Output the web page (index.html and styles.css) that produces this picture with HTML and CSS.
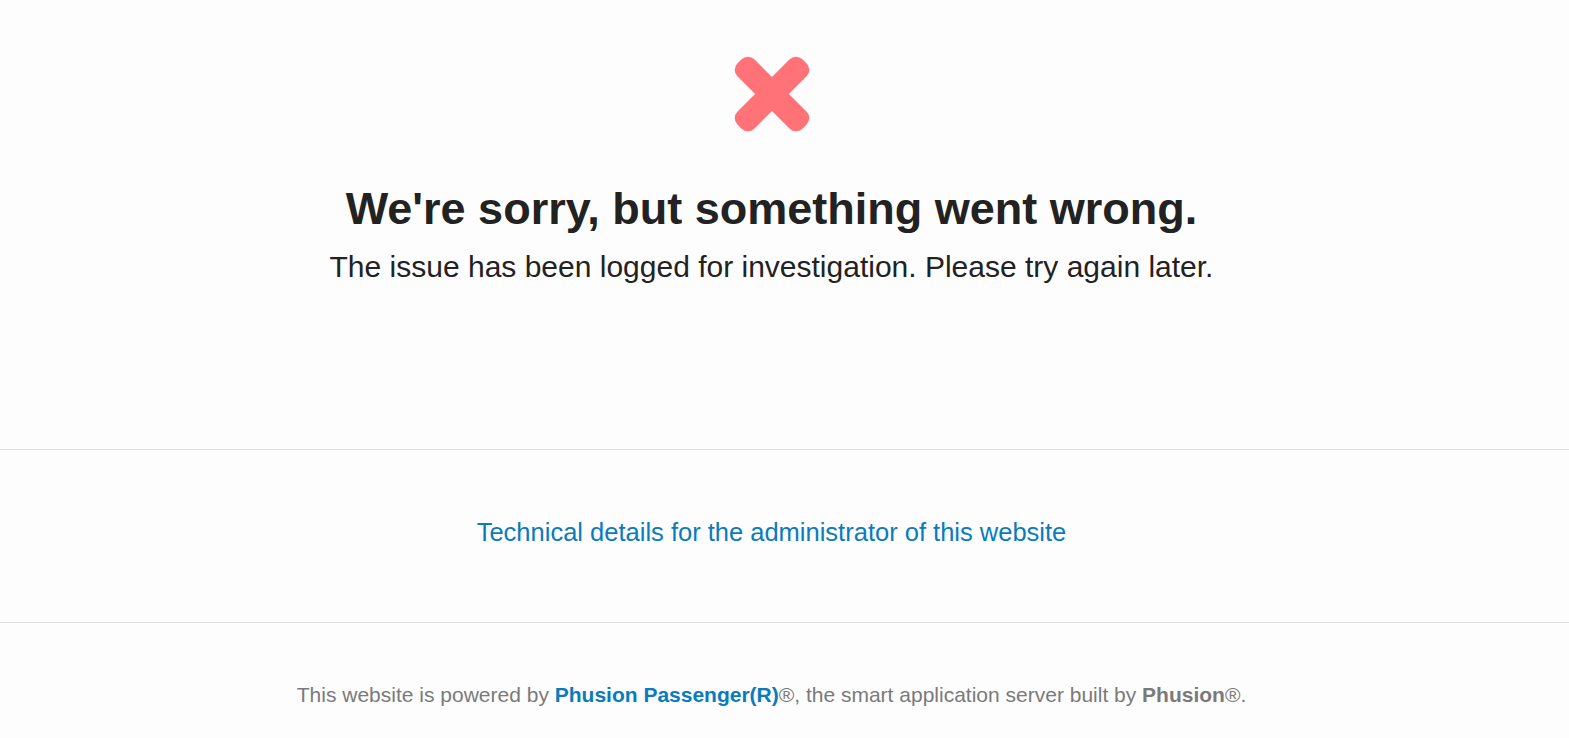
FILE: index.html
```html
<!DOCTYPE html>
<html>
<head>
<meta charset="utf-8">
<title>We're sorry, but something went wrong</title>
<link rel="stylesheet" href="styles.css">
</head>
<body>
<div class="page">
  <section class="top">
    <div class="inner">
      <svg class="icon" width="80" height="80" viewBox="0 0 80 80" aria-hidden="true">
        <g fill="#ff7378" transform="translate(40 40)">
          <rect x="-46" y="-12" width="92" height="24" rx="9" transform="rotate(45)"/>
          <rect x="-46" y="-12" width="92" height="24" rx="9" transform="rotate(-45)"/>
        </g>
      </svg>
      <h1 class="title">We're sorry, but something went wrong.</h1>
      <p class="lead">The issue has been logged for investigation. Please try again later.</p>
    </div>
  </section>
  <section class="middle">
    <div class="inner">
      <a class="details" href="#">Technical details for the administrator of this website</a>
    </div>
  </section>
  <footer class="foot">
    <div class="inner">
      <p class="powered">This website is powered by <a class="brand" href="#">Phusion Passenger(R)</a>®, the smart application server built by <b class="maker">Phusion</b>®.</p>
    </div>
  </footer>
</div>
</body>
</html>
```

FILE: styles.css
```css
html, body {
  margin: 0;
  padding: 0;
  background: #fdfdfd;
}
body {
  font-family: "Liberation Sans", Arial, sans-serif;
  color: #222;
}
.inner {
  width: 1543px;
  text-align: center;
}
.top {
  padding-top: 54px;
  height: 450px;
  box-sizing: border-box;
  border-bottom: 1px solid #e2e2e2;
}
.icon {
  display: block;
  margin: 0 auto;
  width: 80px;
  height: 80px;
}
.title {
  margin: 47px 0 0;
  font-size: 45px;
  line-height: 56px;
  font-weight: bold;
  color: #222;
}
.lead {
  margin: 12px 0 0;
  font-size: 30px;
  line-height: 36px;
  color: #222;
}
.middle {
  height: 173px;
  box-sizing: border-box;
  border-bottom: 1px solid #e2e2e2;
  display: flex;
  align-items: center;
  padding-bottom: 8px;
}
.details {
  font-size: 25.5px;
  color: #0a7bbd;
  text-decoration: none;
}
.foot {
  padding-top: 59px;
}
.powered {
  margin: 0;
  font-size: 21px;
  line-height: 26px;
  color: #7a7a7a;
}
.brand {
  color: #0a7bbd;
  font-weight: bold;
  text-decoration: none;
}
.maker {
  color: #7a7a7a;
}
```
